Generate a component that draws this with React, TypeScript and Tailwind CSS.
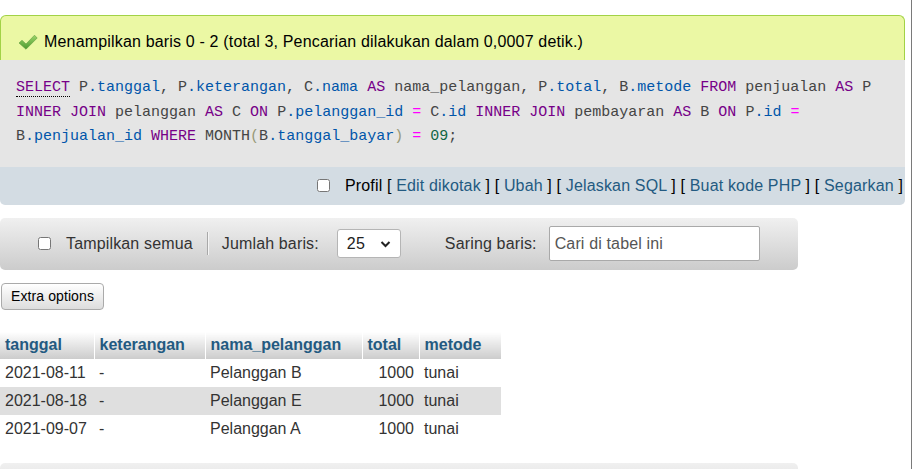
import React from 'react';

type Tok = [string, string?];

const KW = 'text-[#770088]';
const V2 = 'text-[#0055aa]';
const OP = 'text-[#ff00ff]';
const NUM = 'text-[#116644]';
const BR = 'text-[#999977]';

const sqlLines: Tok[][] = [
  [
    ['SELECT', 'kwlink'], [' P'], ['.tanggal', V2], [', P'], ['.keterangan', V2], [', C'], ['.nama', V2], [' '], ['AS', KW],
    [' nama_pelanggan, P'], ['.total', V2], [', B'], ['.metode', V2], [' '], ['FROM', KW], [' penjualan '], ['AS', KW], [' P'],
  ],
  [
    ['INNER', KW], [' '], ['JOIN', KW], [' pelanggan '], ['AS', KW], [' C '], ['ON', KW], [' P'], ['.pelanggan_id', V2], [' '],
    ['=', OP], [' C'], ['.id', V2], [' '], ['INNER', KW], [' '], ['JOIN', KW], [' pembayaran '], ['AS', KW], [' B '], ['ON', KW],
    [' P'], ['.id', V2], [' '], ['=', OP],
  ],
  [
    ['B'], ['.penjualan_id', V2], [' '], ['WHERE', KW], [' MONTH'], ['(', BR], ['B'], ['.tanggal_bayar', V2], [')', BR], [' '],
    ['=', OP], [' '], ['09', NUM], [';'],
  ],
];

const rows = [
  { tanggal: '2021-08-11', ket: '-', nama: 'Pelanggan B', total: '1000', metode: 'tunai' },
  { tanggal: '2021-08-18', ket: '-', nama: 'Pelanggan E', total: '1000', metode: 'tunai' },
  { tanggal: '2021-09-07', ket: '-', nama: 'Pelanggan A', total: '1000', metode: 'tunai' },
];

function CheckIcon() {
  return (
    <svg width="20" height="16" viewBox="0 0 20 16" className="shrink-0">
      <defs>
        <linearGradient id="chk" x1="0" y1="0" x2="0" y2="1">
          <stop offset="0" stopColor="#9bd66a" />
          <stop offset="1" stopColor="#4e9a2f" />
        </linearGradient>
      </defs>
      <path d="M1 9 L4 6.3 L8 10 L16.5 1.2 L19.2 4 L8 15.2 Z" fill="url(#chk)" stroke="#5e9c3c" strokeWidth="0.6" strokeLinejoin="round" />
    </svg>
  );
}

function Link({ children }: { children: React.ReactNode }) {
  return <span className="text-[#235a81]">{children}</span>;
}

export default function App() {
  return (
    <div className="flex w-[914px] h-[469px] overflow-hidden bg-white font-['Liberation_Sans',Arial,sans-serif] text-black">
      <div className="w-[911px] shrink-0 pt-[15px]">
        {/* query result message */}
        <div className="w-[905px]">
          <div className="h-[45px] flex items-center pt-[8px] rounded-t-[6px] border border-b-0 border-[#a2d246] bg-[#ebf8a4] text-[16px] leading-[20px] tracking-[0.17px]">
            <span className="ml-[17px] mr-[6px] flex items-center"><CheckIcon /></span>
            <span>Menampilkan baris 0 - 2 (total 3, Pencarian dilakukan dalam 0,0007 detik.)</span>
          </div>
          <div className="bg-[#e5e5e5] pt-[16px] pb-[17px] pl-[16px] font-['Liberation_Mono','DejaVu_Sans_Mono',monospace] text-[15px] leading-[24.5px] text-[#444] whitespace-pre">
            {sqlLines.map((line, i) => (
              <div key={i}>
                {line.map(([t, c], j) =>
                  c === 'kwlink' ? (
                    <span key={j} className={`${KW} border-b border-dotted border-black`}>{t}</span>
                  ) : (
                    <span key={j} className={c}>{t}</span>
                  )
                )}
              </div>
            ))}
          </div>
          <div className="h-[38px] flex items-center justify-end pr-[2px] bg-[#d3dce3] rounded-b-[5px] text-[16px] tracking-[0.16px]">
            <input type="checkbox" className="w-[13px] h-[13px] m-0 mr-[15px]" />
            <span className="whitespace-pre">
              Profil [ <Link>Edit dikotak</Link> ] [ <Link>Ubah</Link> ] [ <Link>Jelaskan SQL</Link> ] [ <Link>Buat kode PHP</Link> ] [ <Link>Segarkan</Link> ]
            </span>
          </div>
        </div>

        {/* navigation */}
        <div className="mt-[13px] w-[798px] h-[52px] flex items-center rounded-[5px] bg-gradient-to-b from-[#f0f0f0] to-[#cccccc] text-[16px] text-[#333] tracking-[0.15px]">
          <input type="checkbox" className="w-[13px] h-[13px] m-0 ml-[38px]" />
          <span className="ml-[15px]">Tampilkan semua</span>
          <span className="ml-[14px] h-[23px] w-[2px] border-l border-[#a8a8a8] border-r border-r-[#f4f4f4]" />
          <span className="ml-[13px]">Jumlah baris:</span>
          <div className="ml-[18px] w-[64px] h-[29px] flex items-center justify-between pl-[9px] pr-[9px] bg-white border border-[#b5b5b5] rounded-[3px]">
            <span className="text-[#222]">25</span>
            <svg width="11" height="8" viewBox="0 0 11 8"><path d="M1.5 2 L5.5 6 L9.5 2" fill="none" stroke="#222" strokeWidth="2" /></svg>
          </div>
          <span className="ml-[44px]">Saring baris:</span>
          <input
            type="text"
            placeholder="Cari di tabel ini"
            className="ml-[12px] w-[211px] h-[35px] px-[5px] bg-white border border-[#a9a9a9] rounded-[2px] text-[16px] tracking-[0.15px] placeholder:text-[#555] outline-none"
          />
        </div>

        {/* extra options */}
        <button className="mt-[13px] ml-px w-[103px] h-[27px] border border-[#aaaaaa] rounded-[4px] bg-gradient-to-b from-white to-[#dddddd] text-[14px] text-black leading-none tracking-[0.1px]">
          Extra options
        </button>

        {/* results table */}
        <table className="mt-[22px] table-fixed border-collapse text-[16px] text-[#333]">
          <colgroup>
            <col className="w-[94px]" />
            <col className="w-[111px]" />
            <col className="w-[157px]" />
            <col className="w-[57px]" />
            <col className="w-[82px]" />
          </colgroup>
          <thead>
            <tr className="h-[27px] bg-gradient-to-b from-white to-[#cccccc]">
              {['tanggal', 'keterangan', 'nama_pelanggan', 'total', 'metode'].map((h, i) => (
                <th
                  key={h}
                  className={`px-[5px] text-left font-bold text-[#235a81] ${i < 4 ? 'border-r border-white' : ''} bg-gradient-to-b from-white to-[#cccccc]`}
                >
                  {h}
                </th>
              ))}
            </tr>
          </thead>
          <tbody>
            {rows.map((r, i) => (
              <tr key={i} className={`h-[28px] ${i === 1 ? 'bg-[#dfdfdf]' : 'bg-white'}`}>
                <td className="px-[5px]">{r.tanggal}</td>
                <td className="px-[5px]">{r.ket}</td>
                <td className="px-[5px]">{r.nama}</td>
                <td className="px-[5px] text-right">{r.total}</td>
                <td className="px-[5px]">{r.metode}</td>
              </tr>
            ))}
          </tbody>
        </table>

        {/* bottom navigation */}
        <div className="mt-[20px] w-[798px] h-[52px] rounded-[5px] bg-gradient-to-b from-[#f0f0f0] to-[#cccccc]" />
      </div>
      <div className="w-px h-full bg-[#7a7a7a]" />
    </div>
  );
}
